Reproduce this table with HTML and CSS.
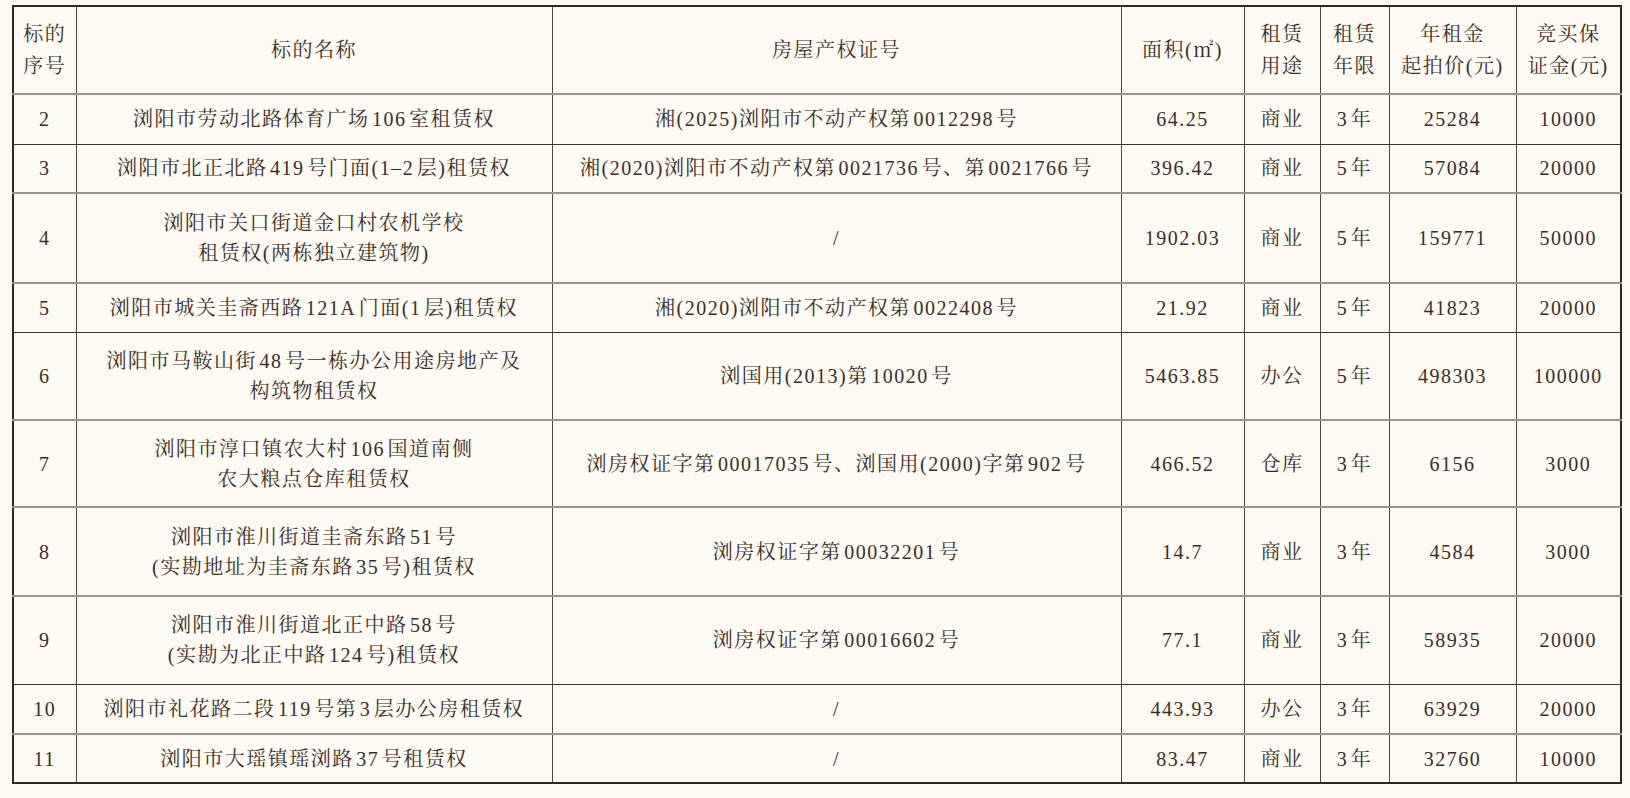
FILE: index.html
```html
<!DOCTYPE html>
<html lang="zh-CN">
<head>
<meta charset="utf-8">
<title>租赁权标的一览表</title>
<link rel="stylesheet" href="styles.css">
</head>
<body>
<table class="lease">
  <colgroup>
    <col class="c-no">
    <col class="c-name">
    <col class="c-cert">
    <col class="c-area">
    <col class="c-use">
    <col class="c-term">
    <col class="c-rent">
    <col class="c-dep">
  </colgroup>
  <thead>
    <tr class="r-head soft">
      <th>标的<br>序号</th>
      <th>标的名称</th>
      <th>房屋产权证号</th>
      <th>面积(㎡)</th>
      <th>租赁<br>用途</th>
      <th>租赁<br>年限</th>
      <th>年租金<br>起拍价(元)</th>
      <th>竞买保<br>证金(元)</th>
    </tr>
  </thead>
  <tbody>
    <tr class="r-50">
      <td>2</td>
      <td>浏阳市劳动北路体育广场106室租赁权</td>
      <td>湘(2025)浏阳市不动产权第0012298号</td>
      <td>64.25</td>
      <td>商业</td>
      <td>3年</td>
      <td>25284</td>
      <td>10000</td>
    </tr>
    <tr class="r-49 soft">
      <td>3</td>
      <td>浏阳市北正北路419号门面(1–2层)租赁权</td>
      <td>湘(2020)浏阳市不动产权第0021736号、第0021766号</td>
      <td>396.42</td>
      <td>商业</td>
      <td>5年</td>
      <td>57084</td>
      <td>20000</td>
    </tr>
    <tr class="r-90 soft">
      <td>4</td>
      <td>浏阳市关口街道金口村农机学校<br>租赁权(两栋独立建筑物)</td>
      <td>/</td>
      <td>1902.03</td>
      <td>商业</td>
      <td>5年</td>
      <td>159771</td>
      <td>50000</td>
    </tr>
    <tr class="r-49">
      <td>5</td>
      <td>浏阳市城关圭斋西路121A门面(1层)租赁权</td>
      <td>湘(2020)浏阳市不动产权第0022408号</td>
      <td>21.92</td>
      <td>商业</td>
      <td>5年</td>
      <td>41823</td>
      <td>20000</td>
    </tr>
    <tr class="r-88 soft">
      <td>6</td>
      <td>浏阳市马鞍山街48号一栋办公用途房地产及<br>构筑物租赁权</td>
      <td>浏国用(2013)第10020号</td>
      <td>5463.85</td>
      <td>办公</td>
      <td>5年</td>
      <td>498303</td>
      <td>100000</td>
    </tr>
    <tr class="r-87 soft">
      <td>7</td>
      <td>浏阳市淳口镇农大村106国道南侧<br>农大粮点仓库租赁权</td>
      <td>浏房权证字第00017035号、浏国用(2000)字第902号</td>
      <td>466.52</td>
      <td>仓库</td>
      <td>3年</td>
      <td>6156</td>
      <td>3000</td>
    </tr>
    <tr class="r-89 soft">
      <td>8</td>
      <td>浏阳市淮川街道圭斋东路51号<br>(实勘地址为圭斋东路35号)租赁权</td>
      <td>浏房权证字第00032201号</td>
      <td>14.7</td>
      <td>商业</td>
      <td>3年</td>
      <td>4584</td>
      <td>3000</td>
    </tr>
    <tr class="r-88">
      <td>9</td>
      <td>浏阳市淮川街道北正中路58号<br>(实勘为北正中路124号)租赁权</td>
      <td>浏房权证字第00016602号</td>
      <td>77.1</td>
      <td>商业</td>
      <td>3年</td>
      <td>58935</td>
      <td>20000</td>
    </tr>
    <tr class="r-50 soft">
      <td>10</td>
      <td>浏阳市礼花路二段119号第3层办公房租赁权</td>
      <td>/</td>
      <td>443.93</td>
      <td>办公</td>
      <td>3年</td>
      <td>63929</td>
      <td>20000</td>
    </tr>
    <tr class="r-49">
      <td>11</td>
      <td>浏阳市大瑶镇瑶浏路37号租赁权</td>
      <td>/</td>
      <td>83.47</td>
      <td>商业</td>
      <td>3年</td>
      <td>32760</td>
      <td>10000</td>
    </tr>
  </tbody>
</table>
</body>
</html>
```

FILE: styles.css
```css
html, body {
  margin: 0;
  padding: 0;
  background: #fdf9f3;
}

body {
  padding: 5px 0 0 12px;
  color: #3a2f28;
  font-family: "Liberation Serif", "Noto Serif CJK SC", "Noto Sans CJK SC", serif;
  font-size: 20px;
  letter-spacing: 1.5px;
  text-autospace: normal;
}

.lease {
  width: 1608px;
  table-layout: fixed;
  border-collapse: collapse;
  border: 2px solid #2e2925;
}

.c-no { width: 63px; }
.c-name { width: 476px; }
.c-cert { width: 569px; }
.c-area { width: 123px; }
.c-use { width: 76px; }
.c-term { width: 69px; }
.c-rent { width: 127px; }
.c-dep { width: 105px; }

.lease th,
.lease td {
  padding: 0;
  text-align: center;
  vertical-align: middle;
  font-weight: 400;
  line-height: 30px;
  border-left: 1px solid #4e4843;
  border-right: 1px solid #4e4843;
  border-top: 1px solid #3a3530;
  border-bottom: 1px solid #3a3530;
}

.lease tr.soft > th,
.lease tr.soft > td {
  border-bottom: 2px solid #9a948d;
}

.lease th:first-child,
.lease td:first-child {
  border-left: 2px solid #2e2925;
}

.lease th:last-child,
.lease td:last-child {
  border-right: 2px solid #2e2925;
}

.lease thead th {
  border-top: 2px solid #2e2925;
  line-height: 32px;
}

.lease tbody tr:last-child td {
  border-bottom: 2px solid #2e2925;
}

.r-head { height: 88px; }
.r-49 { height: 49px; }
.r-50 { height: 50px; }
.r-87 { height: 87px; }
.r-88 { height: 88px; }
.r-89 { height: 89px; }
.r-90 { height: 90px; }
```
